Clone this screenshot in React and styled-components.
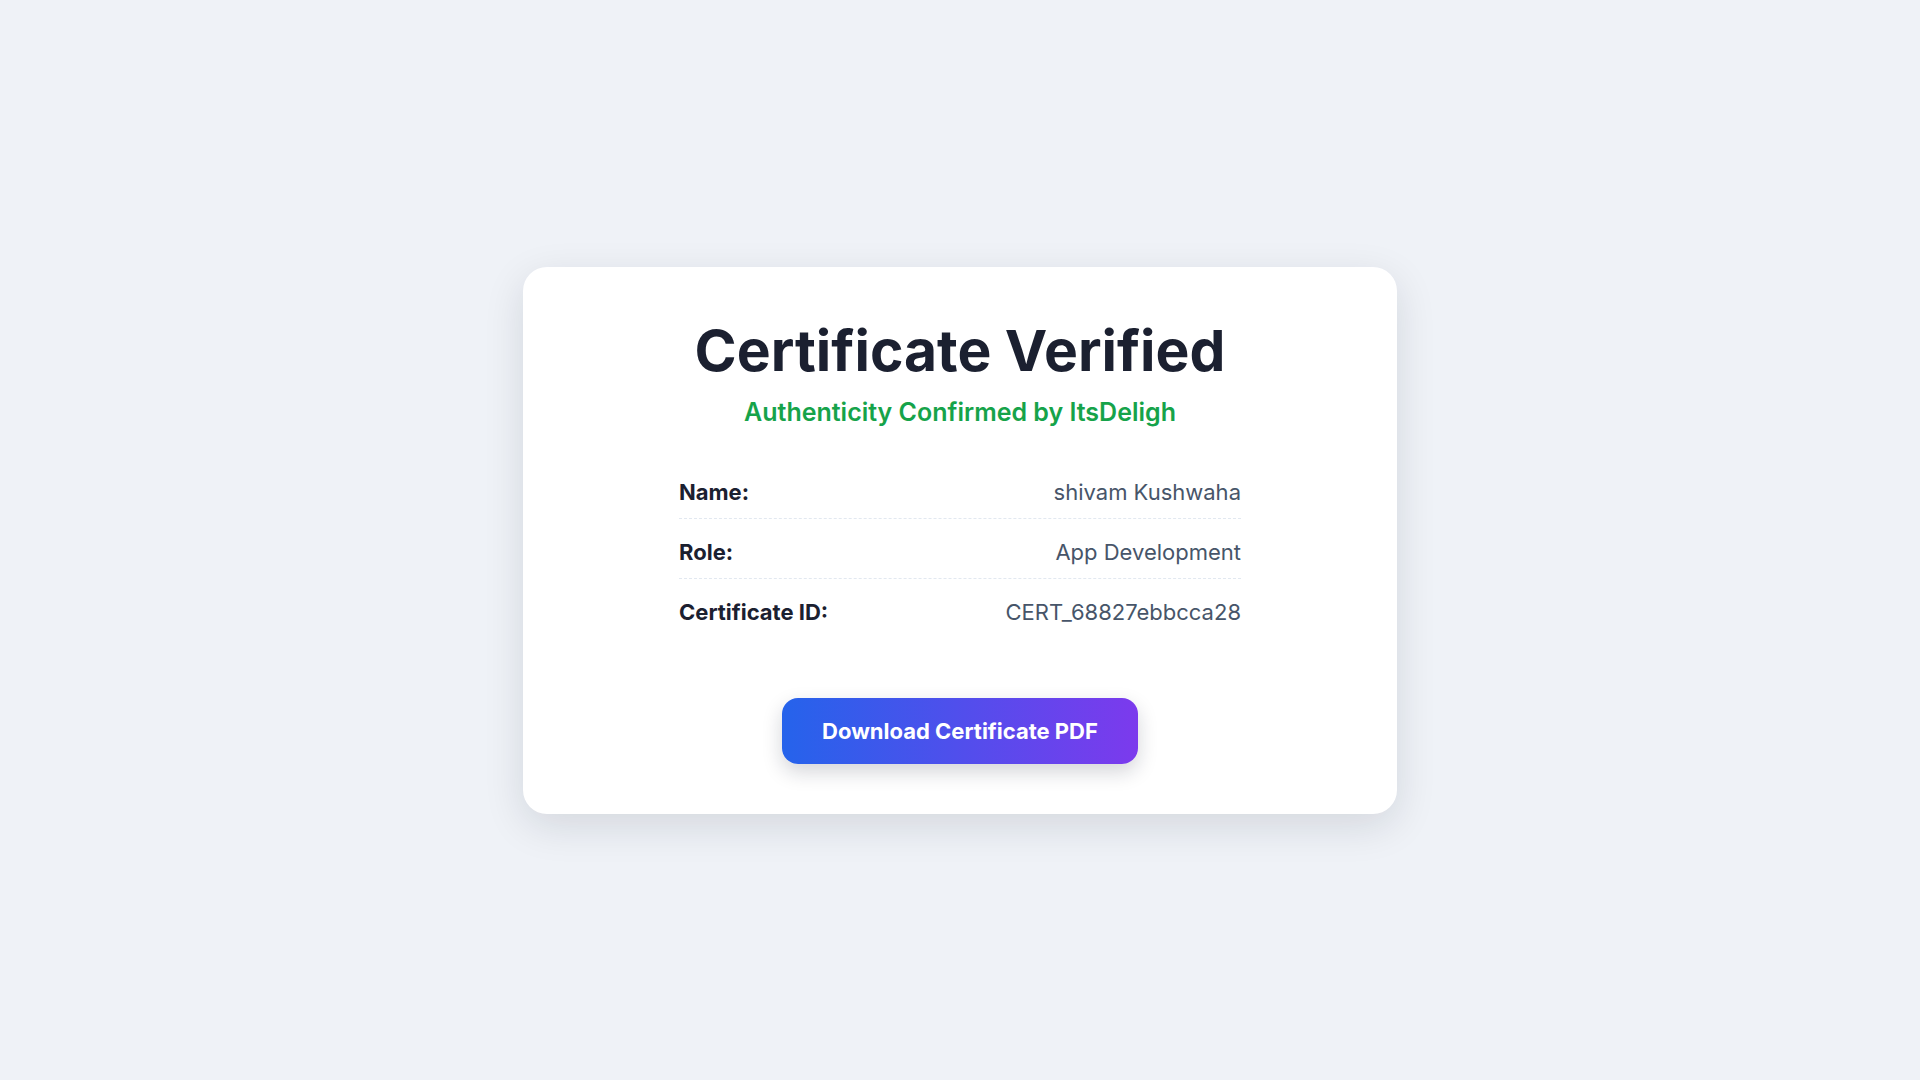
import React from "react";
import styled, { createGlobalStyle } from "styled-components";

const GlobalStyle = createGlobalStyle`
  * { box-sizing: border-box; }
  html, body {
    margin: 0;
    padding: 0;
    background: #eff2f7;
    font-family: Inter, "Noto Sans", Arial, sans-serif;
  }
`;

const details = [
  { label: "Name:", value: "shivam Kushwaha" },
  { label: "Role:", value: "App Development" },
  { label: "Certificate ID:", value: "CERT_68827ebbcca28" },
];

function App() {
  return (
    <Page>
      <GlobalStyle />
      <Card>
        <Title>Certificate Verified</Title>
        <Subtitle>Authenticity Confirmed by ItsDeligh</Subtitle>
        <Details>
          {details.map((d) => (
            <Row key={d.label}>
              <Label>{d.label}</Label>
              <Value>{d.value}</Value>
            </Row>
          ))}
        </Details>
        <DownloadButton type="button">Download Certificate PDF</DownloadButton>
      </Card>
    </Page>
  );
}

const Page = styled.main`
  min-height: 100vh;
  display: flex;
  align-items: center;
  justify-content: center;
`;

const Card = styled.section`
  width: 874px;
  background: #ffffff;
  border-radius: 24px;
  padding: 48px 48px 50px;
  box-shadow: 0 12px 40px rgba(15, 23, 42, 0.12);
  display: flex;
  flex-direction: column;
  align-items: center;
  text-align: center;
`;

const Title = styled.h1`
  margin: 0;
  font-size: 57px;
  line-height: 72px;
  font-weight: 700;
  color: #1b2030;
`;

const Subtitle = styled.p`
  margin: 10px 0 0;
  font-size: 25px;
  line-height: 30px;
  font-weight: 600;
  color: #16a34a;
`;

const Details = styled.div`
  width: 562px;
  margin-top: 32px;
`;

const Row = styled.div`
  display: flex;
  justify-content: space-between;
  align-items: center;
  padding: 18px 0 11px;
  font-size: 22px;
  line-height: 30px;
  border-bottom: 1px dashed #e2e8f0;

  &:last-child {
    border-bottom: none;
  }
`;

const Label = styled.span`
  font-weight: 700;
  color: #1b2030;
`;

const Value = styled.span`
  color: #475569;
`;

const DownloadButton = styled.button`
  margin-top: 60px;
  width: 356px;
  height: 66px;
  border: none;
  border-radius: 16px;
  background: linear-gradient(90deg, #2563eb, #7c3aed);
  color: #ffffff;
  font-family: inherit;
  font-size: 22px;
  font-weight: 700;
  cursor: pointer;
  box-shadow: 0 8px 20px rgba(15, 23, 42, 0.18);
`;

export default App;
